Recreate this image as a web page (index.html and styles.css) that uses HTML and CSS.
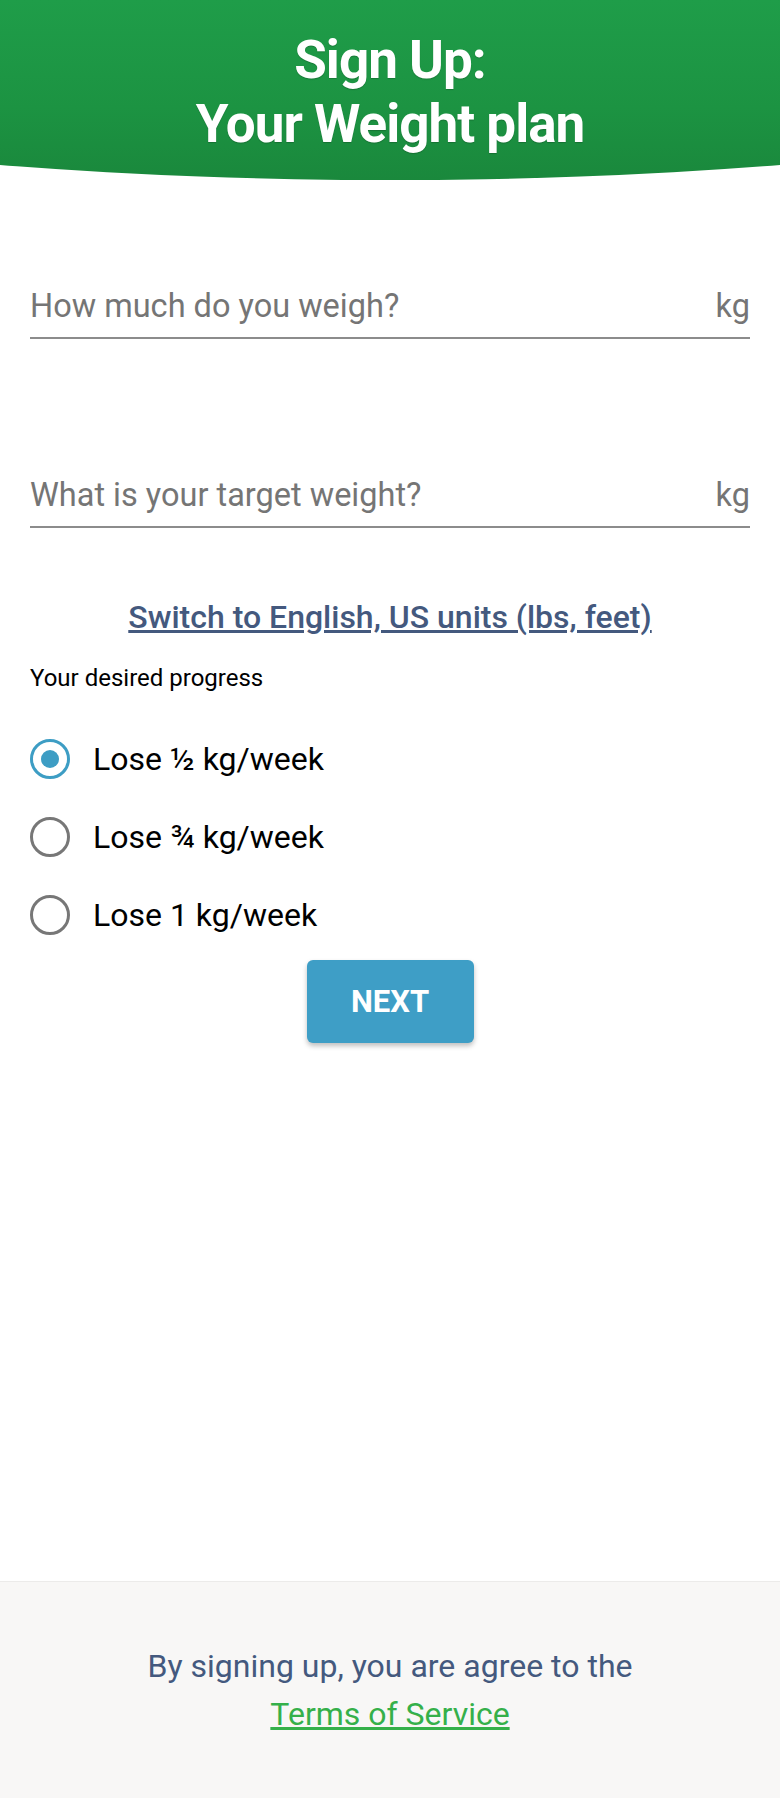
FILE: index.html
```
<!DOCTYPE html>
<html lang="en">
<head>
    <meta charset="UTF-8">
    <title>Sign Up: Your Weight plan</title>
    <link rel="stylesheet" href="styles.css">
</head>
<body>
    <div class="page">
        <header class="hero">
            <h1>Sign Up:<br>Your Weight plan</h1>
        </header>

        <form class="plan-form" id="plan-form">
            <div class="field first">
                <input type="number" id="weight" placeholder="How much do you weigh?">
                <span class="unit">kg</span>
            </div>
            <div class="field">
                <input type="number" id="target" placeholder="What is your target weight?">
                <span class="unit">kg</span>
            </div>

            <a href="#" class="units-link">Switch to English, US units (lbs, feet)</a>

            <p class="progress-label">Your desired progress</p>

            <label class="option">
                <input type="radio" name="progress" value="0.5" checked>
                <span>Lose ½ kg/week</span>
            </label>
            <label class="option">
                <input type="radio" name="progress" value="0.75">
                <span>Lose ¾ kg/week</span>
            </label>
            <label class="option">
                <input type="radio" name="progress" value="1">
                <span>Lose 1 kg/week</span>
            </label>

            <div class="actions">
                <button type="submit">NEXT</button>
            </div>
        </form>

        <footer class="terms">
            <p>By signing up, you are agree to the<br><a href="#">Terms of Service</a></p>
        </footer>
    </div>
</body>
</html>
```

FILE: styles.css
```
* {
    box-sizing: border-box;
}
body {
    margin: 0;
    font-family: Roboto, "Liberation Sans", Arial, sans-serif;
    background: #fff;
}
.page {
    min-height: 1798px;
    display: flex;
    flex-direction: column;
}
.hero {
    height: 180px;
    padding-top: 28px;
    background: linear-gradient(180deg, #1f9d49 0%, #1c9342 60%, #1a883c 100%);
    clip-path: ellipse(125% 100% at 50% 0);
    text-align: center;
}
.hero h1 {
    margin: 0;
    color: #fff;
    font-size: 53px;
    line-height: 64px;
    font-weight: 700;
    letter-spacing: -1px;
    text-shadow: 0 1px 1px rgba(0,0,0,0.2);
}
.plan-form {
    flex: 1;
    padding: 0 30px;
    display: flex;
    flex-direction: column;
}
.field {
    display: flex;
    align-items: center;
    margin-top: 136px;
    padding-bottom: 11px;
    border-bottom: 2px solid #8c8c8c;
}
.field.first {
    margin-top: 106px;
}
.field input {
    flex: 1;
    border: none;
    outline: none;
    padding: 0;
    height: 40px;
    font-family: inherit;
    font-size: 32.5px;
    color: #333;
    background: transparent;
}
.field input::placeholder {
    color: #757575;
}
.unit {
    font-size: 32.5px;
    line-height: 40px;
    color: #757575;
}
.units-link {
    margin-top: 69px;
    align-self: center;
    font-size: 32px;
    line-height: 40px;
    font-weight: 500;
    color: #44597e;
}
.progress-label {
    margin: 27px 0 0;
    font-size: 24px;
    line-height: 28px;
    color: #000;
}
.option {
    display: flex;
    align-items: center;
    height: 78px;
    gap: 23px;
    font-size: 32px;
    color: #000;
    cursor: pointer;
}
.option:first-of-type {
    margin-top: 28px;
}
.option input {
    appearance: none;
    margin: 0;
    width: 40px;
    height: 40px;
    border: 3px solid #777;
    border-radius: 50%;
    display: grid;
    place-items: center;
}
.option input:checked {
    border-color: #3d9dc4;
}
.option input:checked::after {
    content: "";
    width: 18px;
    height: 18px;
    border-radius: 50%;
    background: #3d9dc4;
}
.actions {
    margin-top: 6px;
    text-align: center;
}
button {
    width: 167px;
    height: 83px;
    border: none;
    border-radius: 6px;
    background: #3e9ec6;
    color: #fff;
    font-family: inherit;
    font-size: 31px;
    font-weight: 700;
    box-shadow: 0 3px 5px rgba(0,0,0,0.25);
    cursor: pointer;
}
.terms {
    background: #f8f7f6;
    border-top: 1px solid #ecebea;
    padding: 60px 20px 60px;
    text-align: center;
}
.terms p {
    margin: 0;
    font-size: 32px;
    line-height: 48px;
    color: #44597e;
}
.terms a {
    color: #35b04a;
}
```
